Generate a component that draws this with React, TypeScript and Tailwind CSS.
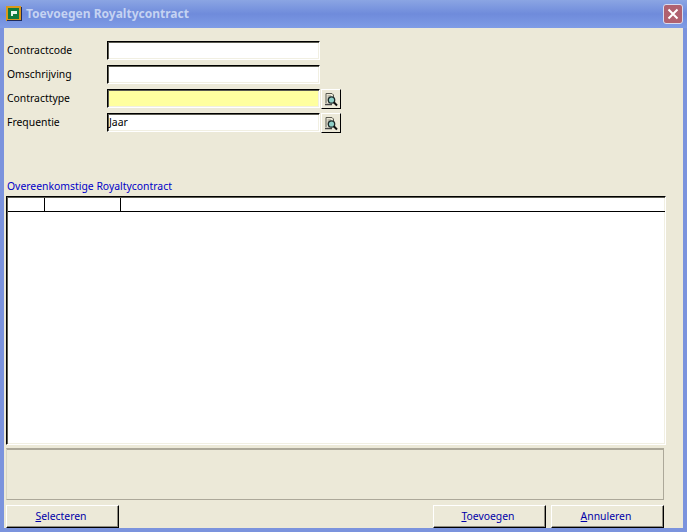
const font = '[font-family:"Noto_Sans","DejaVu_Sans",sans-serif]';

function LookupIcon() {
  return (
    <svg width="16" height="16" viewBox="0 0 16 16" fill="none">
      <path d="M3 2.500h6l1.500 1.500v2M3 2.500V12" stroke="#5a5a50" strokeWidth="1" />
      <path d="M2 13.500h7" stroke="#444" strokeWidth="1.500" />
      <path d="M4.500 5h3.500M4.500 7h1.500M4.500 9h1" stroke="#8a8a7c" strokeWidth="1" />
      <circle cx="8.500" cy="9" r="3.200" fill="#8fcfc8" stroke="#1c2a2a" strokeWidth="1.300" />
      <path d="M10.800 11.300l3.200 3.200" stroke="#111" strokeWidth="2" />
    </svg>
  );
}

function LookupButton() {
  return (
    <button className="flex h-[20px] w-[20px] items-center justify-center border border-t-white border-l-white border-r-black border-b-black bg-[#ece9d8]">
      <LookupIcon />
    </button>
  );
}

function Field({ label, value, required, lookup }: { label: string; value?: string; required?: boolean; lookup?: boolean }) {
  return (
    <div className="flex h-[19px] items-center">
      <div className="w-[100px] text-[10.4px] text-black">{label}</div>
      <div
        className={`flex h-[19px] w-[213px] items-center border border-t-black border-l-black border-r-white border-b-white pl-px text-[10.4px] text-black shadow-[inset_1px_1px_0_#5a5a50,inset_-1px_-1px_0_#f1efe2] ${required ? 'bg-[#ffff9f]' : 'bg-white'}`}
      >
        {value}
      </div>
      {lookup && (
        <div className="ml-px">
          <LookupButton />
        </div>
      )}
    </div>
  );
}

function ActionButton({ first, rest }: { first: string; rest: string }) {
  return (
    <button className="h-[23px] w-[113px] border border-t-white border-l-white border-r-black border-b-black bg-[#ece9d8] pr-[3px] text-center text-[10.4px] text-[#0000a8] shadow-[inset_-1px_-1px_0_#8e8c80]">
      <span className="underline">{first}</span>
      {rest}
    </button>
  );
}

export default function App() {
  return (
    <div className={`flex h-[532px] w-[687px] flex-col overflow-hidden bg-[#7b93dd] ${font}`}>
      {/* Title bar */}
      <div className="flex h-[28px] shrink-0 items-center bg-gradient-to-b from-[#8ba5e3] via-[#6f8bdb] to-[#7f9ce6] pl-[6px] pr-[4px]">
        <svg width="16" height="16" viewBox="0 0 16 16">
          <rect x="0" y="0" width="15" height="15" fill="#d9981c" />
          <rect x="2" y="2" width="11" height="11" fill="#0f7a3e" />
          <path d="M5 5h6v3H7v2H5z" fill="#e8f5ec" />
          <path d="M1 15h15V1h-1v13H1z" fill="#1d2a5c" />
        </svg>
        <span className="ml-[4px] text-[12px] font-bold text-[#c5d3f2]">Toevoegen Royaltycontract</span>
        <div className="ml-auto flex h-[20px] w-[20px] items-center justify-center rounded-[3px] border border-[#d8dcef] bg-[#b0616f]">
          <svg width="12" height="12" viewBox="0 0 12 12">
            <path d="M1.500 1.500l9 9M10.500 1.500l-9 9" stroke="#fff" strokeWidth="2" />
          </svg>
        </div>
      </div>

      {/* Dialog body */}
      <div className="mx-[4px] mb-[4px] flex min-h-0 flex-1 flex-col bg-[#ece9d8] pl-[3px] pr-[19px]">
        <div className="mt-[13px] flex flex-col gap-[5px]">
          <Field label="Contractcode" />
          <Field label="Omschrijving" />
          <Field label="Contracttype" required lookup />
          <Field label="Frequentie" value="Jaar" lookup />
        </div>

        <div className="mt-[47px] text-[10.4px] leading-[15px] text-[#0000c8]">Overeenkomstige Royaltycontract</div>

        {/* Grid */}
        <div className="mt-[2px] -ml-px -mr-[2px] flex h-[250px] flex-col border border-t-black border-l-black border-r-white border-b-white bg-white shadow-[inset_1px_1px_0_#5a5a50,inset_-1px_-1px_0_#f1efe2]">
          <div className="ml-px mt-px flex h-[14px] border-b border-black">
            <div className="w-[37px] border-r border-black" />
            <div className="w-[76px] border-r border-black" />
          </div>
        </div>

        {/* Status panel */}
        <div className="mt-[3px] -ml-px h-[52px] border border-t-2 border-t-[#aca899] border-l-[#d8d5c4] border-r-[#aca899] border-b-[#aca899] bg-[#ece9d8]" />

        {/* Buttons */}
        <div className="mt-[5px] -ml-px flex">
          <ActionButton first="S" rest="electeren" />
          <div className="ml-auto flex gap-[5px]">
            <ActionButton first="T" rest="oevoegen" />
            <ActionButton first="A" rest="nnuleren" />
          </div>
        </div>
      </div>
    </div>
  );
}
